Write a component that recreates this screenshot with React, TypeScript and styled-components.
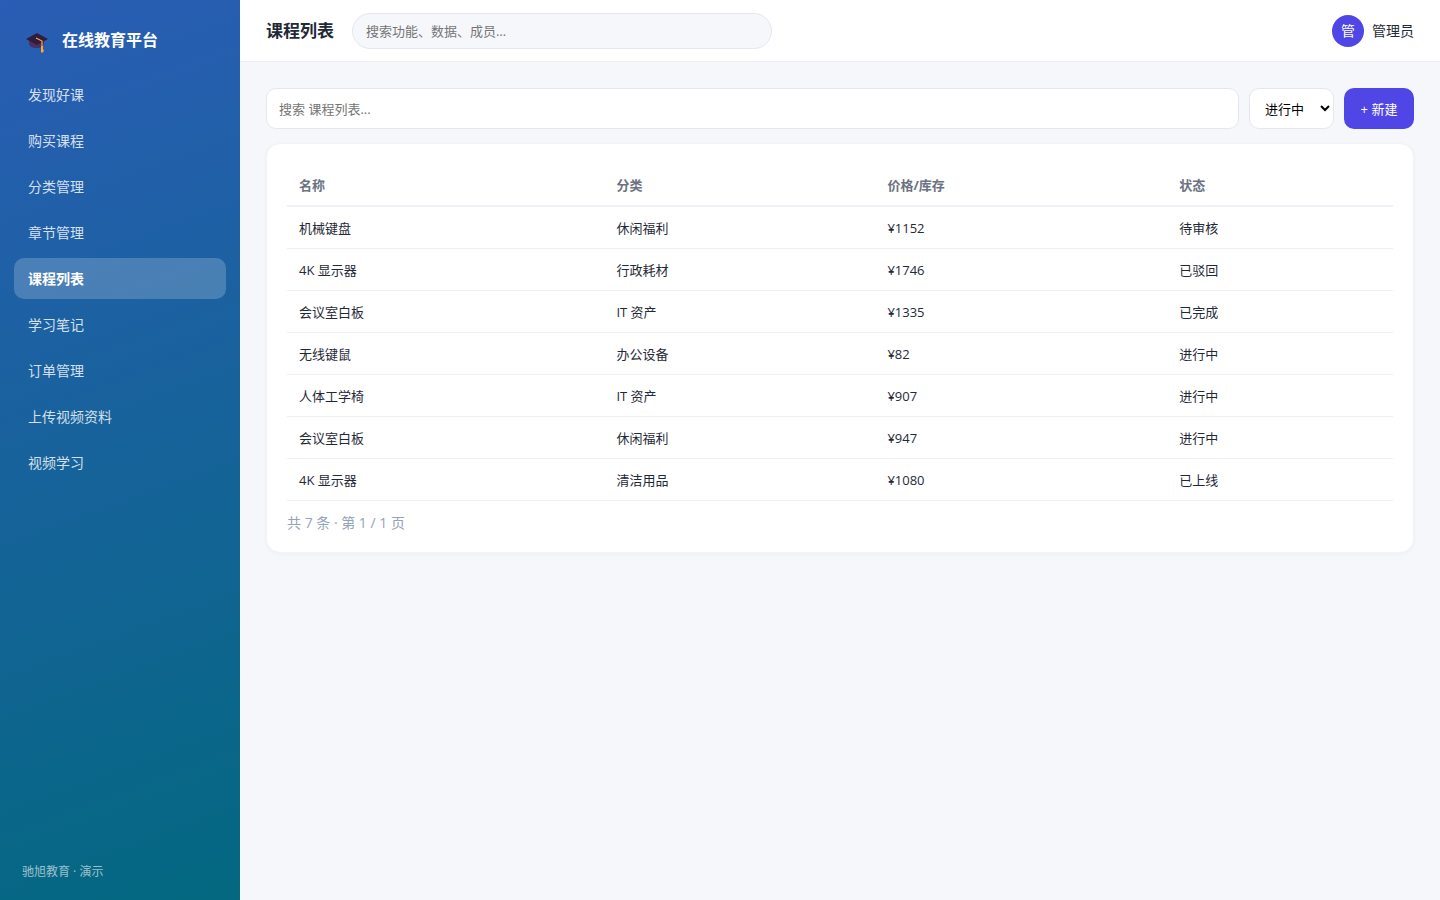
import React from "react";
import styled, { createGlobalStyle } from "styled-components";

const GlobalStyle = createGlobalStyle`
  * { box-sizing: border-box; }
  body {
    margin: 0;
    background: #f5f7fb;
    color: #1f2937;
    font-family: "Open Sans", "Noto Sans CJK SC", sans-serif;
    font-size: 14px;
    line-height: 20px;
  }
  button, input, select { font: inherit; }
`;

const Shell = styled.div`
  display: flex;
  min-height: 100vh;
`;

const Sidebar = styled.aside`
  display: flex;
  flex-direction: column;
  flex: 0 0 240px;
  padding: 22px 14px 18px;
  background: linear-gradient(160deg, #2a5db5, #036880);
  color: #fff;
`;

const Brand = styled.div`
  display: flex;
  align-items: center;
  gap: 12px;
  height: 36px;
  padding: 0 10px;
  font-size: 16px;
  font-weight: 700;
`;

const CapIcon = styled.svg`
  width: 26px;
  height: 24px;
  margin-top: 6px;
`;

const Nav = styled.nav`
  display: flex;
  flex-direction: column;
  flex: 1;
  gap: 5px;
  margin-top: 16px;
`;

const NavLink = styled.a<{ $active?: boolean }>`
  padding: 11px 14px 10px;
  border-radius: 10px;
  color: ${(p) => (p.$active ? "#fff" : "rgba(255, 255, 255, 0.82)")};
  background: ${(p) => (p.$active ? "rgba(255, 255, 255, 0.2)" : "transparent")};
  font-weight: ${(p) => (p.$active ? 700 : 400)};
  text-decoration: none;
`;

const SidebarFoot = styled.div`
  padding: 0 8px;
  color: rgba(255, 255, 255, 0.6);
  font-size: 12px;
`;

const Main = styled.div`
  display: flex;
  flex-direction: column;
  flex: 1;
  min-width: 0;
`;

const Header = styled.header`
  display: flex;
  align-items: center;
  gap: 18px;
  height: 62px;
  padding: 0 26px;
  background: #fff;
  border-bottom: 1px solid #eceef3;
`;

const Title = styled.h1`
  margin: 0;
  font-size: 17px;
  font-weight: 700;
  white-space: nowrap;
`;

const GlobalSearch = styled.input`
  flex: 0 1 420px;
  min-width: 0;
  height: 36px;
  padding: 0 13px;
  border: 1px solid #e5e7ef;
  border-radius: 18px;
  background: #f6f7fb;
  font-size: 13px;
  &::placeholder { color: #757575; }
`;

const User = styled.div`
  display: flex;
  align-items: center;
  gap: 8px;
  margin-left: auto;
  white-space: nowrap;
`;

const Avatar = styled.span`
  display: grid;
  place-items: center;
  width: 32px;
  height: 32px;
  border-radius: 50%;
  background: #4f46e5;
  color: #fff;
`;

const Content = styled.main`
  padding: 26px;
`;

const Toolbar = styled.div`
  display: flex;
  gap: 10px;
  height: 41px;
  margin-bottom: 14px;
  font-size: 13px;
`;

const ListSearch = styled.input`
  flex: 1;
  min-width: 0;
  padding: 0 12px;
  border: 1px solid #e5e7ef;
  border-radius: 10px;
  background: #fff;
  &::placeholder { color: #757575; }
`;

const StatusSelect = styled.select`
  width: 85px;
  padding: 0 1px 0 11px;
  border: 1px solid #e5e7ef;
  border-radius: 10px;
  background: #fff;
  color: #000;
`;

const CreateButton = styled.button`
  width: 70px;
  padding: 0;
  border: 0;
  border-radius: 10px;
  background: #4f46e5;
  color: #fff;
`;

const Card = styled.section`
  padding: 20px 20px 19px;
  border: 1px solid #f1f3f7;
  border-radius: 14px;
  background: #fff;
  box-shadow: 0 1px 4px rgba(30, 41, 59, 0.04);
  font-size: 13px;
`;

const Table = styled.table`
  width: 100%;
  table-layout: fixed;
  border-collapse: separate;
  border-spacing: 0;
`;

const HeadCell = styled.th<{ $width: string }>`
  width: ${(p) => p.$width};
  height: 43px;
  padding: 0 12px;
  border-bottom: 2px solid #eef0f5;
  color: #6b7280;
  font-weight: 700;
  text-align: left;
`;

const Cell = styled.td`
  height: 42px;
  padding: 0 12px;
  border-bottom: 1px solid #eef0f4;
`;

const Pager = styled.div`
  margin-top: 12px;
  color: #94a3b8;
  font-size: 14px;
`;

const navItems = [
  "发现好课", "购买课程", "分类管理", "章节管理", "课程列表",
  "学习笔记", "订单管理", "上传视频资料", "视频学习",
];

const columns = [
  { label: "名称", width: "28.7%" },
  { label: "分类", width: "24.5%" },
  { label: "价格/库存", width: "26.4%" },
  { label: "状态", width: "20.4%" },
];

const rows = [
  ["机械键盘", "休闲福利", "¥1152", "待审核"],
  ["4K 显示器", "行政耗材", "¥1746", "已驳回"],
  ["会议室白板", "IT 资产", "¥1335", "已完成"],
  ["无线键鼠", "办公设备", "¥82", "进行中"],
  ["人体工学椅", "IT 资产", "¥907", "进行中"],
  ["会议室白板", "休闲福利", "¥947", "进行中"],
  ["4K 显示器", "清洁用品", "¥1080", "已上线"],
];

export default function App() {
  return (
    <>
      <GlobalStyle />
      <Shell>
        <Sidebar>
          <Brand>
            <CapIcon viewBox="0 0 26 24" aria-hidden="true">
              <path d="M5 8v5c1 3 4 4 8 4s5-1 7-4V8z" fill="#4b2e63" />
              <path d="M13 2 24 8 13 14 2 8z" fill="#2f1d40" />
              <path d="m12 7 6 3v6" fill="none" stroke="#fbab2c" strokeWidth="1.2" />
              <path d="M17 15h2v3l1 2-2 2-1-1z" fill="#fbab2c" />
            </CapIcon>
            在线教育平台
          </Brand>
          <Nav>
            {navItems.map((item) => (
              <NavLink
                key={item}
                href="#"
                $active={item === "课程列表"}
                aria-current={item === "课程列表" ? "page" : undefined}
              >
                {item}
              </NavLink>
            ))}
          </Nav>
          <SidebarFoot>驰旭教育 · 演示</SidebarFoot>
        </Sidebar>
        <Main>
          <Header>
            <Title>课程列表</Title>
            <GlobalSearch aria-label="全局搜索" placeholder="搜索功能、数据、成员…" />
            <User>
              <Avatar>管</Avatar>
              管理员
            </User>
          </Header>
          <Content>
            <Toolbar>
              <ListSearch aria-label="搜索课程列表" placeholder="搜索 课程列表..." />
              <StatusSelect aria-label="状态" defaultValue="进行中">
                <option>进行中</option>
                <option>待审核</option>
                <option>已完成</option>
              </StatusSelect>
              <CreateButton type="button">+ 新建</CreateButton>
            </Toolbar>
            <Card>
              <Table>
                <thead>
                  <tr>
                    {columns.map((c) => (
                      <HeadCell key={c.label} $width={c.width}>{c.label}</HeadCell>
                    ))}
                  </tr>
                </thead>
                <tbody>
                  {rows.map((row, i) => (
                    <tr key={i}>
                      {row.map((value, j) => (
                        <Cell key={j}>{value}</Cell>
                      ))}
                    </tr>
                  ))}
                </tbody>
              </Table>
              <Pager>共 7 条 · 第 1 / 1 页</Pager>
            </Card>
          </Content>
        </Main>
      </Shell>
    </>
  );
}
